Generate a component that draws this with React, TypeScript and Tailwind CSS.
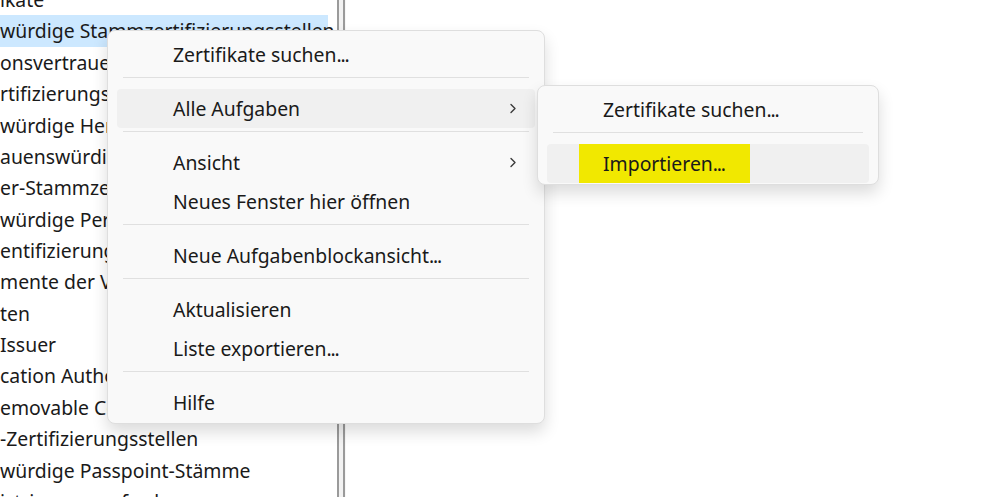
import React from "react";

type MenuEntry =
  | { kind: "item"; label: string; submenu?: boolean; hover?: boolean }
  | { kind: "sep" };

const treeRows = [
  "ikate",
  "würdige Stammzertifizierungsstellen",
  "onsvertrauen",
  "rtifizierungsstellen",
  "würdige Herausgeber",
  "auenswürdige Zertifikate",
  "er-Stammzertifizierungsstellen",
  "würdige Personen",
  "entifizierungsaussteller",
  "mente der Vorabversion",
  "ten",
  "Issuer",
  "cation Authorities",
  "emovable Certificates",
  "-Zertifizierungsstellen",
  "würdige Passpoint-Stämme",
  "istrierungsanforderungen",
];

const mainMenu: MenuEntry[] = [
  { kind: "item", label: "Zertifikate suchen..." },
  { kind: "sep" },
  { kind: "item", label: "Alle Aufgaben", submenu: true, hover: true },
  { kind: "sep" },
  { kind: "item", label: "Ansicht", submenu: true },
  { kind: "item", label: "Neues Fenster hier öffnen" },
  { kind: "sep" },
  { kind: "item", label: "Neue Aufgabenblockansicht..." },
  { kind: "sep" },
  { kind: "item", label: "Aktualisieren" },
  { kind: "item", label: "Liste exportieren..." },
  { kind: "sep" },
  { kind: "item", label: "Hilfe" },
];

// Segoe-style tight dots on "..." labels
const Label: React.FC<{ text: string }> = ({ text }) => {
  if (!text.endsWith("...")) return <>{text}</>;
  return (
    <>
      {text.slice(0, -3)}
      <span className="tracking-[-1.2px]">...</span>
    </>
  );
};

const Chevron = () => (
  <svg width="8" height="11" viewBox="0 0 8 11" className="shrink-0">
    <path d="M2 1.5 L6 5.5 L2 9.5" fill="none" stroke="#3a3a3a" strokeWidth="1.4" strokeLinecap="round" strokeLinejoin="round" />
  </svg>
);

const Separator = () => (
  <div className="pt-[3px] pb-[11px] px-[15px]">
    <div className="h-px bg-[#e0e0e0]" />
  </div>
);

const MenuRow: React.FC<{ label: string; submenu?: boolean; hover?: boolean }> = ({ label, submenu, hover }) => (
  <div className="h-[39px] px-[9px]">
    <div
      className={`h-full flex items-center rounded-[4px] pl-[56px] pr-[18px] ${hover ? "bg-[#f0f0f0]" : ""}`}
    >
      <span className="flex-1 whitespace-nowrap">
        <Label text={label} />
      </span>
      {submenu && <Chevron />}
    </div>
  </div>
);

export default function App() {
  return (
    <div
      className="relative w-[983px] h-[497px] overflow-hidden bg-white flex text-[19.4px] text-[#1a1a1a]"
      style={{ fontFamily: '"Noto Sans", "Open Sans", sans-serif' }}
    >
      {/* tree pane */}
      <div className="w-[337px] shrink-0 overflow-hidden">
        <div className="mt-[-16px] flex flex-col">
          {treeRows.map((row, i) => (
            <div
              key={i}
              className={`h-[31.36px] flex items-center whitespace-nowrap pr-2 ${i === 1 ? "bg-[#cce8ff] w-[328px]" : ""}`}
            >
              {row}
            </div>
          ))}
        </div>
      </div>

      {/* splitter */}
      <div className="w-[9px] shrink-0 flex">
        <div className="w-[2px] bg-[#9a9a9a]" />
        <div className="w-[4px] bg-[#f2f2f2]" />
        <div className="w-[2px] bg-[#9a9a9a]" />
        <div className="w-px bg-[#f7f7f7]" />
      </div>

      <div className="flex-1 bg-white" />

      {/* context menu */}
      <div className="absolute left-[107px] top-[30px] w-[438px] pt-[4px] pb-[1px] rounded-[8px] bg-[#f9f9f9] border border-[#dedede] shadow-[0_8px_16px_rgba(0,0,0,0.14)]">
        {mainMenu.map((e, i) =>
          e.kind === "sep" ? <Separator key={i} /> : <MenuRow key={i} label={e.label} submenu={e.submenu} hover={e.hover} />
        )}
      </div>

      {/* submenu */}
      <div className="absolute left-[537px] top-[85px] w-[342px] pt-[4px] pb-[1px] rounded-[8px] bg-[#f9f9f9] border border-[#dedede] shadow-[0_8px_16px_rgba(0,0,0,0.14)]">
        <MenuRow label="Zertifikate suchen..." />
        <Separator />
        <div className="h-[39px] px-[9px]">
          <div className="h-full flex items-center rounded-[4px] bg-[#f0f0f0] pl-[32px]">
            <span className="h-full w-[171px] flex items-center bg-[#f1e800] pl-[24px] whitespace-nowrap">
              <Label text="Importieren..." />
            </span>
          </div>
        </div>
      </div>
    </div>
  );
}
